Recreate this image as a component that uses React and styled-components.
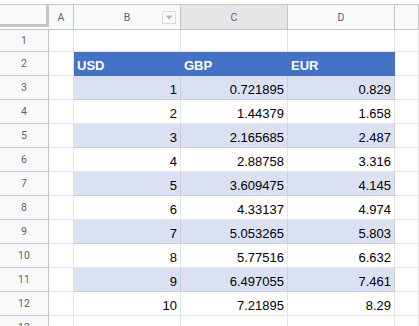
import React from "react";
import styled, { createGlobalStyle, css } from "styled-components";

const Global = createGlobalStyle`
  html, body { margin: 0; padding: 0; background: #fff; }
  body { overflow: hidden; height: 326px; }
`;

const Sheet = styled.div`
  padding-top: 4px;
  display: grid;
  grid-template-columns: 49px 25px 107px 107px 107px 1fr;
  grid-template-rows: 26px 22px repeat(12, 24px);
  font-family: "Liberation Sans", Arial, sans-serif;
`;

const HeadCell = styled.div`
  position: relative;
  box-sizing: border-box;
  border-top: 1px solid #c4c7c5;
  border-bottom: 1px solid #c4c7c5;
  border-right: 1px solid #c4c7c5;
  background: ${(p) => (p.$active ? "#e5e6e8" : "#f8f9fa")};
  color: #5f6368;
  font-family: Roboto, "Liberation Sans", Arial, sans-serif;
  font-size: 10.5px;
  display: flex;
  align-items: center;
  justify-content: center;
`;

const Corner = styled.div`
  box-sizing: border-box;
  border-top: 1px solid #c4c7c5;
  border-bottom: 1px solid #c4c7c5;
  background: #f8f9fa;
  display: flex;
`;

const CornerInner = styled.div`
  flex: 1;
  box-sizing: border-box;
  border-right: 3px solid #c4c7c5;
  border-bottom: 3px solid #c4c7c5;
  margin-bottom: 2px;
`;

const FilterBtn = styled.div`
  position: absolute;
  right: 4px;
  top: 6px;
  width: 14px;
  height: 13px;
  box-sizing: border-box;
  border: 1px solid #dadce0;
  background: #fafafa;
  display: flex;
  align-items: center;
  justify-content: center;
`;

const RowNum = styled.div`
  box-sizing: border-box;
  border-right: 1px solid #c4c7c5;
  border-bottom: 1px solid #c4c7c5;
  background: #f8f9fa;
  color: #5f6368;
  font-family: Roboto, "Liberation Sans", Arial, sans-serif;
  font-size: 10.5px;
  display: flex;
  align-items: center;
  justify-content: center;
`;

const Cell = styled.div`
  box-sizing: border-box;
  border-right: 1px solid #e2e3e3;
  border-bottom: 1px solid #e2e3e3;
  background: #fff;
  color: #000;
  font-size: 13px;
  line-height: 15px;
  display: flex;
  align-items: flex-end;
  justify-content: ${(p) => (p.$left ? "flex-start" : "flex-end")};
  padding: 0 3px 2px 3px;
  white-space: nowrap;
  overflow: hidden;
  ${(p) =>
    p.$band &&
    css`
      background: #d9e1f2;
      border-right-color: #c9cfdc;
      border-bottom-color: #c9cfdc;
    `}
  ${(p) =>
    p.$head &&
    css`
      background: #4472c4;
      border-right-color: #4472c4;
      border-bottom-color: #4472c4;
      color: #fff;
      font-weight: bold;
      padding-left: 3px;
    `}
`;

const data = [
  [1, "0.721895", "0.829"],
  [2, "1.44379", "1.658"],
  [3, "2.165685", "2.487"],
  [4, "2.88758", "3.316"],
  [5, "3.609475", "4.145"],
  [6, "4.33137", "4.974"],
  [7, "5.053265", "5.803"],
  [8, "5.77516", "6.632"],
  [9, "6.497055", "7.461"],
  [10, "7.21895", "8.29"],
];

export default function App() {
  return (
    <>
      <Global />
      <Sheet>
        <Corner>
          <CornerInner />
        </Corner>
        <HeadCell>A</HeadCell>
        <HeadCell>
          B
          <FilterBtn>
            <svg width="8" height="5" viewBox="0 0 8 5">
              <path d="M0.5 0.5 L7.5 0.5 L4 4.5 Z" fill="#b0b3b8" />
            </svg>
          </FilterBtn>
        </HeadCell>
        <HeadCell $active>C</HeadCell>
        <HeadCell>D</HeadCell>
        <HeadCell />

        <RowNum>1</RowNum>
        <Cell />
        <Cell />
        <Cell />
        <Cell />
        <Cell />

        <RowNum>2</RowNum>
        <Cell />
        <Cell $head $left>USD</Cell>
        <Cell $head $left>GBP</Cell>
        <Cell $head $left>EUR</Cell>
        <Cell />

        {data.map((r, i) => {
          const band = i % 2 === 0;
          return (
            <React.Fragment key={i}>
              <RowNum>{i + 3}</RowNum>
              <Cell />
              <Cell $band={band}>{r[0]}</Cell>
              <Cell $band={band}>{r[1]}</Cell>
              <Cell $band={band}>{r[2]}</Cell>
              <Cell />
            </React.Fragment>
          );
        })}

        <RowNum>13</RowNum>
        <Cell />
        <Cell />
        <Cell />
        <Cell />
        <Cell />
      </Sheet>
    </>
  );
}
